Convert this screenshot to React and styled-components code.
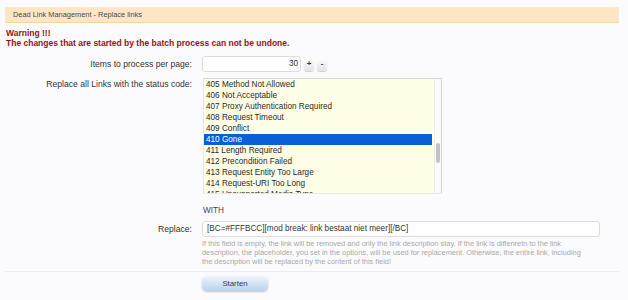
import React from 'react';
import styled, { createGlobalStyle } from 'styled-components';

const GlobalStyle = createGlobalStyle`
  html, body {
    margin: 0;
    padding: 0;
    background: #fbfbfd;
  }
  body {
    font-family: "Liberation Sans", Arial, sans-serif;
    color: #333;
  }
`;

const Page = styled.div`
  width: 628px;
  height: 300px;
  padding: 7px 9px 0 5px;
  box-sizing: border-box;
  overflow: hidden;
`;

const TitleBar = styled.div`
  height: 15px;
  line-height: 15px;
  padding-left: 8px;
  background: #fee5c3;
  border-bottom: 1px solid #f6d59e;
  font-size: 7.4px;
  color: #4a4a4a;
`;

const Warning = styled.div`
  margin-top: 5px;
  padding-left: 1px;
  font-size: 8.5px;
  font-weight: bold;
  line-height: 10px;
  color: #a10d14;
`;

const Form = styled.div`
  display: flex;
  flex-direction: column;
  margin-top: 8px;
`;

const Row = styled.div`
  display: grid;
  grid-template-columns: 187px 1fr;
  column-gap: 10px;
  align-items: ${({ $top }) => ($top ? 'start' : 'center')};
  margin-top: ${({ $gap }) => $gap || 0}px;
`;

const Label = styled.div`
  text-align: right;
  font-size: 8.6px;
  color: #333;
  padding-top: ${({ $top }) => ($top ? '1px' : '0')};
`;

const Controls = styled.div`
  display: flex;
  align-items: center;
  gap: 3px;
`;

const TextInput = styled.div`
  box-sizing: border-box;
  width: ${({ $w }) => $w}px;
  height: 16px;
  line-height: 14px;
  padding: 0 ${({ $right }) => ($right ? '2px' : '4px')};
  background: #fff;
  border: 1px solid #dcdcdc;
  border-radius: 3px;
  font-size: 8.2px;
  color: #333;
  text-align: ${({ $right }) => ($right ? 'right' : 'left')};
  white-space: nowrap;
  overflow: hidden;
`;

const SpinButton = styled.div`
  box-sizing: border-box;
  width: 10px;
  height: 14px;
  line-height: 13px;
  text-align: center;
  font-size: 8px;
  font-weight: bold;
  color: #333;
  border-radius: 3px;
  background: linear-gradient(#ffffff, #e3e3e6);
  box-shadow: 0 1px 1px rgba(0, 0, 0, 0.18);
`;

const SelectBox = styled.div`
  box-sizing: border-box;
  width: 239px;
  height: 116px;
  margin-left: 1px;
  display: flex;
  background: #fefee6;
  border: 1px solid #d6d6d6;
  border-left-color: #e6e6e6;
  border-bottom-color: #e8e8e8;
  overflow: hidden;
`;

const OptionList = styled.div`
  flex: 1;
  padding-right: 2px;
`;

const Option = styled.div`
  height: 11px;
  line-height: 11px;
  padding-left: 2px;
  font-size: 8.2px;
  white-space: nowrap;
  color: ${({ $selected }) => ($selected ? '#fff' : '#2b2b2b')};
  background: ${({ $selected }) => ($selected ? '#0b5ed6' : 'transparent')};
`;

const ScrollTrack = styled.div`
  width: 7px;
  background: #fafafa;
  border-left: 1px solid #ececec;
  padding-top: 64px;
  box-sizing: border-box;
`;

const ScrollThumb = styled.div`
  width: 4px;
  height: 20px;
  margin-left: 1px;
  border-radius: 2px;
  background: #c3c3c3;
`;

const WithText = styled.div`
  font-size: 8.2px;
  color: #444;
  padding-left: 1px;
`;

const Help = styled.div`
  margin-top: 2px;
  font-size: 7.4px;
  line-height: 9px;
  color: #a8a8a8;
  white-space: nowrap;
`;

const Separator = styled.div`
  height: 1px;
  margin-top: 5px;
  background: #e6eef6;
`;

const SubmitRow = styled.div`
  padding-left: 197px;
  margin-top: 4px;
`;

const Button = styled.div`
  box-sizing: border-box;
  width: 66px;
  height: 15px;
  line-height: 15px;
  text-align: center;
  font-size: 7.8px;
  color: #23405f;
  border-radius: 5px;
  background: linear-gradient(#eef5fc, #b9d2ec);
  box-shadow: 0 1px 2px rgba(60, 90, 130, 0.35);
`;

const codes = [
  '405 Method Not Allowed',
  '406 Not Acceptable',
  '407 Proxy Authentication Required',
  '408 Request Timeout',
  '409 Conflict',
  '410 Gone',
  '411 Length Required',
  '412 Precondition Failed',
  '413 Request Entity Too Large',
  '414 Request-URI Too Long',
  '415 Unsupported Media Type',
];

const App = () => {
  return (
    <Page>
      <GlobalStyle />
      <TitleBar>Dead Link Management - Replace links</TitleBar>
      <Warning>
        Warning !!!
        <br />
        The changes that are started by the batch process can not be undone.
      </Warning>
      <Form>
        <Row>
          <Label>Items to process per page:</Label>
          <Controls>
            <TextInput $w={99} $right>30</TextInput>
            <SpinButton>+</SpinButton>
            <SpinButton>-</SpinButton>
          </Controls>
        </Row>
        <Row $top $gap={6}>
          <Label $top>Replace all Links with the status code:</Label>
          <SelectBox>
            <OptionList>
              {codes.map((code) => (
                <Option key={code} $selected={code === '410 Gone'}>
                  {code}
                </Option>
              ))}
            </OptionList>
            <ScrollTrack>
              <ScrollThumb />
            </ScrollTrack>
          </SelectBox>
        </Row>
        <Row $gap={12}>
          <div />
          <WithText>WITH</WithText>
        </Row>
        <Row $gap={6}>
          <Label>Replace:</Label>
          <TextInput $w={398}>[BC=#FFFBCC][mod break: link bestaat niet meer][/BC]</TextInput>
        </Row>
        <Row>
          <div />
          <Help>
            If this field is empty, the link will be removed and only the link description stay. If the link is diffenretn to the link
            <br />
            description, the placeholder, you set in the options, will be used for replacement. Otherwise, the entire link, including
            <br />
            the description will be replaced by the content of this field!
          </Help>
        </Row>
      </Form>
      <Separator />
      <SubmitRow>
        <Button>Starten</Button>
      </SubmitRow>
    </Page>
  );
};

export default App;
